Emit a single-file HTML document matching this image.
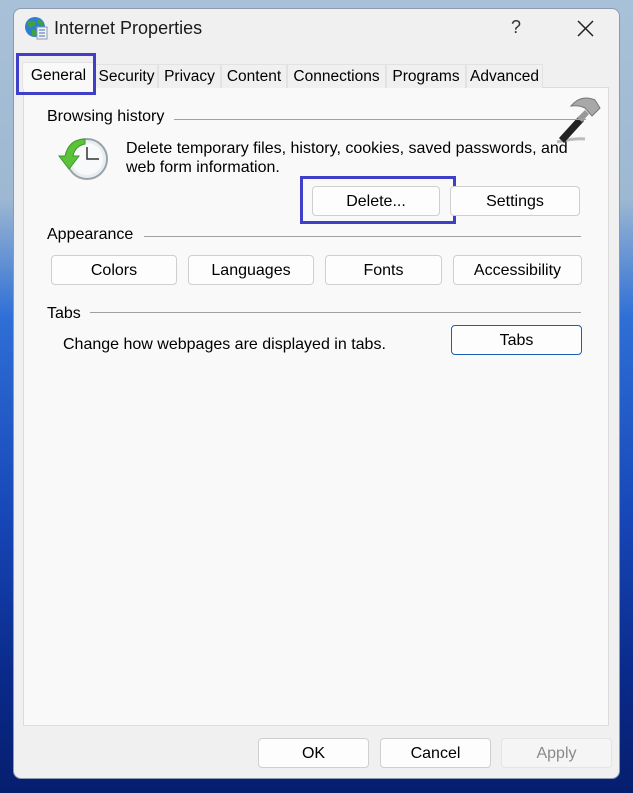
<!DOCTYPE html>
<html><head><style>
*{margin:0;padding:0;box-sizing:border-box}
body{width:633px;height:793px;overflow:hidden;position:relative;font-family:"Liberation Sans",sans-serif;color:#000;
background:linear-gradient(180deg,#a9c1d8 0%,#9db8d2 25%,#2f6fd6 40%,#1747b8 65%,#0a2a8a 85%,#061e6e 100%);}
.a{position:absolute}
.win{left:13px;top:8px;width:607px;height:771px;background:#f0f0f0;border-radius:8px;border:1px solid #8a9bb0}
.title{left:54px;top:18px;font-size:18px;color:#1a1a1a}
.panel{left:23px;top:87px;width:586px;height:639px;background:#f9f9f9;border:1px solid #dcdcdc}
.tab{top:64px;height:24px;font-size:15.5px;line-height:24px;text-align:center;background:#f0f0f0;border:1px solid #e2e2e2;border-bottom:none}
.btn{height:30px;background:#fdfdfd;border:1px solid #cfcfcf;border-radius:4px;font-size:16px;line-height:29px;text-align:center}
.lbl{font-size:16px}
.line{height:1px;background:#a0a0a0}
.hl{border:3px solid #3f3fc8}
</style></head><body>
<div class="a win"></div>
<svg class="a" style="left:24px;top:16px" width="24" height="24" viewBox="0 0 24 24"><circle cx="11" cy="11" r="10" fill="#2f7fd0"/><path d="M4 6 Q9 3 12 7 Q10 11 6 11 Q3 10 4 6Z M13 3 Q18 4 20 9 Q16 10 14 7Z M8 14 Q12 13 13 17 Q11 21 8 19Z" fill="#3fa33a"/><rect x="13" y="11" width="10" height="12" fill="#f4f4f4" stroke="#8a9ab5"/><path d="M15 14h6M15 17h6M15 20h6" stroke="#3a6fc0"/></svg>
<div class="a title">Internet Properties</div>
<div class="a" style="left:511px;top:17px;font-size:18px;color:#333">?</div>
<svg class="a" style="left:577px;top:20px" width="17" height="17"><path d="M1 1L16 16M16 1L1 16" stroke="#222" stroke-width="1.5"/></svg>
<div class="a panel"></div>
<div class="a tab" style="left:95px;width:63px">Security</div>
<div class="a tab" style="left:158px;width:63px">Privacy</div>
<div class="a tab" style="left:221px;width:66px">Content</div>
<div class="a tab" style="left:287px;width:99px">Connections</div>
<div class="a tab" style="left:386px;width:80px">Programs</div>
<div class="a tab" style="left:466px;width:77px">Advanced</div>
<div class="a tab" style="left:22px;top:62px;height:27px;width:73px;background:#f9f9f9;line-height:25px">General</div>
<div class="a hl" style="left:16px;top:53px;width:80px;height:42px"></div>
<svg class="a" style="left:555px;top:86px" width="52" height="58" viewBox="0 0 52 58"><path d="M2 56 Q20 52 30 53" stroke="#bbb" stroke-width="3" fill="none"/><path d="M4 52 L24 30 L29 35 L9 57Z" fill="#222"/><path d="M22 32 L30 24 L34 28 L27 36Z" fill="#999"/><path d="M16 20 Q26 8 40 14 L45 22 L37 30 L30 22 Q24 19 16 20Z" fill="#a8a8a8" stroke="#777"/></svg>
<div class="a lbl" style="left:126px;top:139px;line-height:19px">Delete temporary files, history, cookies, saved passwords, and<br>web form information.</div>
<div class="a lbl" style="left:47px;top:108px">Browsing history</div>
<div class="a line" style="left:174px;top:119px;width:412px"></div>
<svg class="a" style="left:57px;top:136px" width="52" height="46" viewBox="0 0 52 46"><circle cx="30" cy="23" r="20" fill="#e9edf0" stroke="#9aa3aa" stroke-width="2"/><circle cx="30" cy="23" r="16" fill="#f7f9fa"/><path d="M30 11V23H42" stroke="#333" stroke-width="1.5" fill="none"/><path d="M28 3 Q12 3 8 20 L2 20 L12 33 L22 20 L16 20 Q18 10 28 8Z" fill="#5cc23a" stroke="#3a9a2a"/></svg>
<div class="a btn" style="left:312px;top:186px;width:128px">Delete...</div>
<div class="a hl" style="left:300px;top:176px;width:156px;height:48px"></div>
<div class="a btn" style="left:450px;top:186px;width:130px">Settings</div>
<div class="a lbl" style="left:47px;top:226px">Appearance</div>
<div class="a line" style="left:144px;top:236px;width:437px"></div>
<div class="a btn" style="left:51px;top:255px;width:126px">Colors</div>
<div class="a btn" style="left:188px;top:255px;width:126px">Languages</div>
<div class="a btn" style="left:325px;top:255px;width:117px">Fonts</div>
<div class="a btn" style="left:453px;top:255px;width:129px">Accessibility</div>
<div class="a lbl" style="left:47px;top:305px">Tabs</div>
<div class="a line" style="left:90px;top:312px;width:491px"></div>
<div class="a lbl" style="left:63px;top:336px">Change how webpages are displayed in tabs.</div>
<div class="a btn" style="left:451px;top:325px;width:131px;border-color:#1a5fb4">Tabs</div>
<div class="a btn" style="left:258px;top:738px;width:111px">OK</div>
<div class="a btn" style="left:380px;top:738px;width:111px">Cancel</div>
<div class="a btn" style="left:501px;top:738px;width:111px;color:#8a8a8a;background:#f5f5f5;border-color:#e4e4e4">Apply</div>
</body></html>
